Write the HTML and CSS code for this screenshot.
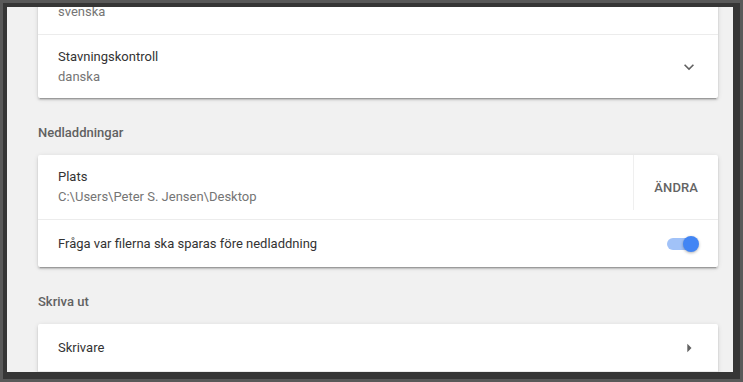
FILE: index.html
```html
<!DOCTYPE html>
<html lang="sv">
<head>
<meta charset="utf-8">
<title>Inställningar</title>
<link rel="stylesheet" href="styles.css">
</head>
<body>
<div class="frame">
  <div class="window">
    <main class="page">
      <section class="card">
        <div class="row two-line">
          <div class="text">
            <div class="primary">Språk</div>
            <div class="secondary">svenska</div>
          </div>
        </div>
        <div class="row two-line">
          <div class="text">
            <div class="primary">Stavningskontroll</div>
            <div class="secondary">danska</div>
          </div>
          <span class="icon">
            <svg viewBox="0 0 24 24" width="20" height="20"><path d="M16.59 8.59L12 13.17 7.41 8.59 6 10l6 6 6-6z"/></svg>
          </span>
        </div>
      </section>

      <h2 class="section-title">Nedladdningar</h2>
      <section class="card">
        <div class="row two-line">
          <div class="text">
            <div class="primary">Plats</div>
            <div class="secondary">C:\Users\Peter S. Jensen\Desktop</div>
          </div>
          <div class="separator"></div>
          <button class="text-btn">Ändra</button>
        </div>
        <div class="row">
          <div class="text"><div class="primary">Fråga var filerna ska sparas före nedladdning</div></div>
          <span class="toggle"><span class="bar"></span><span class="knob"></span></span>
        </div>
      </section>

      <h2 class="section-title">Skriva ut</h2>
      <section class="card card-open">
        <div class="row">
          <div class="text"><div class="primary">Skrivare</div></div>
          <span class="icon">
            <svg viewBox="0 0 24 24" width="20" height="20"><path d="M10 17l5-5-5-5v10z"/></svg>
          </span>
        </div>
      </section>
    </main>
  </div>
</div>
</body>
</html>
```

FILE: styles.css
```css
* { box-sizing: border-box; }

html, body {
  margin: 0;
  padding: 0;
  width: 743px;
  height: 382px;
  overflow: hidden;
  background: #585858;
}

.frame {
  width: 743px;
  height: 382px;
  padding: 3px;
  background: #595959;
}

.window {
  height: 376px;
  border-style: solid;
  border-color: #363636;
  border-width: 4px 7px 7px 4px;
  background: #f1f1f1;
  overflow: hidden;
}

.page {
  margin-top: -37px;
  padding: 0 15px 0 31px;
  font-family: Roboto, "Noto Sans", Arial, sans-serif;
  font-size: 13px;
  color: #333333;
}

.card {
  background: #ffffff;
  border-radius: 2px;
  box-shadow: 0 2px 2px 0 rgba(0,0,0,.14), 0 1px 5px 0 rgba(0,0,0,.12), 0 3px 1px -2px rgba(0,0,0,.2);
}

.card-open {
  padding-bottom: 40px;
}

.card-open .row {
  border-bottom: 1px solid #ececec;
}

.row {
  display: flex;
  align-items: center;
  min-height: 48px;
  padding: 0 20px;
}

.row + .row {
  border-top: 1px solid #ececec;
}

.row.two-line {
  min-height: 64px;
}

.text {
  flex: 1;
  line-height: 20px;
}

.primary {
  color: #333333;
}

.secondary {
  color: #757575;
}

.icon {
  display: flex;
  width: 20px;
  height: 20px;
  margin-right: -1px;
}

.icon svg {
  fill: #616161;
}

.separator {
  align-self: stretch;
  width: 1px;
  margin: 0 20px 9px 0;
  background: #efefef;
}

.text-btn {
  border: 0;
  padding: 0;
  margin: 0;
  background: transparent;
  font-family: Roboto, "Noto Sans", Arial, sans-serif;
  font-size: 13px;
  font-weight: 500;
  color: #646464;
  text-transform: uppercase;
  letter-spacing: 0.1px;
}

.toggle {
  position: relative;
  width: 32px;
  height: 16px;
  margin-right: -1px;
}

.toggle .bar {
  position: absolute;
  left: 0;
  top: 2px;
  width: 26px;
  height: 12px;
  border-radius: 6px;
  background: #a1c2f8;
}

.toggle .knob {
  position: absolute;
  right: 0;
  top: 0;
  width: 16px;
  height: 16px;
  border-radius: 50%;
  background: #4285f4;
  box-shadow: 0 1px 3px rgba(0,0,0,.3);
}

.section-title {
  margin: 0;
  padding: 27px 0 14px;
  font-size: 13px;
  line-height: 16px;
  font-weight: 500;
  color: #616161;
}
```
